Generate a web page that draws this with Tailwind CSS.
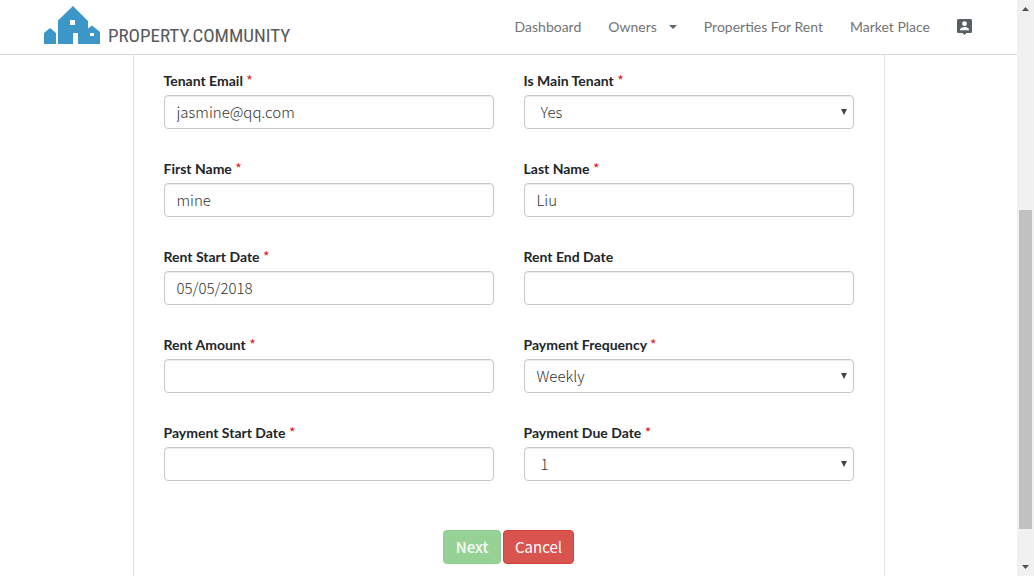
<!DOCTYPE html>
<html lang="en">
<head>
<meta charset="utf-8">
<meta name="viewport" content="width=device-width, initial-scale=1">
<title>Property.Community</title>
<script src="https://cdn.jsdelivr.net/npm/@tailwindcss/browser@4"></script>
</head>
<body class="flex h-screen overflow-hidden bg-white font-['Lato',sans-serif] text-[#212529]">
<div class="flex min-w-0 flex-1 flex-col">
  <header class="flex h-[55px] shrink-0 items-center justify-between border-b border-[#d8d8d8] pr-[45px] pl-[43px]">
    <a href="#" class="flex h-full items-start gap-2 pt-[5px] text-[#58595b]">
      <svg class="h-[39px] w-[57px]" viewBox="0 0 57 39" aria-hidden="true">
        <path fill="#3d96c8" fill-rule="evenodd" d="M1 39V28l6-5 6 5v11zM15 39V15.500L30 1l15 15v7.500l4-3 8 6.500v12H35V28h-5v11zM27 15v5h5v-5zM47 28v3h4v-3z"/>
      </svg>
      <span class="pt-[17px] text-[19px] leading-[28px] font-['Roboto_Condensed','Liberation_Sans_Narrow',sans-serif]">PROPERTY.COMMUNITY</span>
    </a>
    <nav class="flex items-center gap-[27px] text-[14px] leading-5 text-[#737373]">
      <a href="#">Dashboard</a>
      <a href="#" class="flex items-center gap-3">Owners
        <svg class="h-1 w-2" viewBox="0 0 8 4" aria-hidden="true"><path fill="#666" d="M0 0h8L4 4z"/></svg>
      </a>
      <a href="#">Properties For Rent</a>
      <a href="#">Market Place</a>
      <a href="#" aria-label="Account">
        <svg class="h-4 w-[15px]" viewBox="0 0 15 16" aria-hidden="true">
          <path fill="#566060" fill-rule="evenodd" d="M1.500 0h12Q15 0 15 1.500v11Q15 14 13.500 14H9.500l-2 2-2-2h-4Q0 14 0 12.500v-11Q0 0 1.500 0zM7.500 2.300a2.400 2.400 0 1 0 0 4.800a2.400 2.400 0 1 0 0-4.800zM3 11.200h9v-.7C12 8.900 9.200 8 7.500 8S3 8.900 3 10.500z"/>
        </svg>
      </a>
    </nav>
  </header>
  <main class="flex min-h-0 flex-1 px-8">
    <form class="mx-auto w-full max-w-[752px] border-x border-[#e3e3e3] px-[30px] pt-4">
      <div class="grid grid-cols-2 gap-[30px]">
        <div class="flex flex-col gap-1">
          <label for="email" class="h-5 text-[14px] leading-5 font-bold">Tenant Email <span class="font-['Noto_Sans_CJK_SC',sans-serif] leading-none font-normal text-[#e01b24]">*</span></label>
          <input id="email" type="text" value="jasmine@qq.com" class="h-[34px] w-full rounded border border-[#c8c8c8] px-3 pb-[2px] font-['Noto_Sans_CJK_SC',sans-serif] text-[15px] font-light text-[#333] shadow-[inset_0_1px_1px_rgba(0,0,0,0.08)]">
        </div>
        <div class="flex flex-col gap-1">
          <label for="main" class="h-5 text-[14px] leading-5 font-bold">Is Main Tenant <span class="font-['Noto_Sans_CJK_SC',sans-serif] leading-none font-normal text-[#e01b24]">*</span></label>
          <div class="relative">
            <select id="main" class="block h-[34px] w-full appearance-none rounded border border-[#c8c8c8] px-4 font-['Noto_Sans_CJK_SC',sans-serif] text-[15px] font-light text-[#333] shadow-[inset_0_1px_1px_rgba(0,0,0,0.08)]"><option>Yes</option><option>No</option></select>
            <svg class="pointer-events-none absolute top-[14px] right-[7px] h-[6px] w-[6px]" viewBox="0 0 6 6" aria-hidden="true"><path fill="#444" d="M0 0h6L3 6z"/></svg>
          </div>
        </div>
        <div class="flex flex-col gap-1">
          <label for="first" class="h-5 text-[14px] leading-5 font-bold">First Name <span class="font-['Noto_Sans_CJK_SC',sans-serif] leading-none font-normal text-[#e01b24]">*</span></label>
          <input id="first" type="text" value="mine" class="h-[34px] w-full rounded border border-[#c8c8c8] px-3 pb-[2px] font-['Noto_Sans_CJK_SC',sans-serif] text-[15px] font-light text-[#333] shadow-[inset_0_1px_1px_rgba(0,0,0,0.08)]">
        </div>
        <div class="flex flex-col gap-1">
          <label for="last" class="h-5 text-[14px] leading-5 font-bold">Last Name <span class="font-['Noto_Sans_CJK_SC',sans-serif] leading-none font-normal text-[#e01b24]">*</span></label>
          <input id="last" type="text" value="Liu" class="h-[34px] w-full rounded border border-[#c8c8c8] px-3 pb-[2px] font-['Noto_Sans_CJK_SC',sans-serif] text-[15px] font-light text-[#333] shadow-[inset_0_1px_1px_rgba(0,0,0,0.08)]">
        </div>
        <div class="flex flex-col gap-1">
          <label for="start" class="h-5 text-[14px] leading-5 font-bold">Rent Start Date <span class="font-['Noto_Sans_CJK_SC',sans-serif] leading-none font-normal text-[#e01b24]">*</span></label>
          <input id="start" type="text" value="05/05/2018" class="h-[34px] w-full rounded border border-[#c8c8c8] px-3 pb-[2px] font-['Noto_Sans_CJK_SC',sans-serif] text-[15px] font-light text-[#333] shadow-[inset_0_1px_1px_rgba(0,0,0,0.08)]">
        </div>
        <div class="flex flex-col gap-1">
          <label for="end" class="h-5 text-[14px] leading-5 font-bold">Rent End Date</label>
          <input id="end" type="text" class="h-[34px] w-full rounded border border-[#c8c8c8] px-3 pb-[2px] font-['Noto_Sans_CJK_SC',sans-serif] text-[15px] font-light text-[#333] shadow-[inset_0_1px_1px_rgba(0,0,0,0.08)]">
        </div>
        <div class="flex flex-col gap-1">
          <label for="amount" class="h-5 text-[14px] leading-5 font-bold">Rent Amount <span class="font-['Noto_Sans_CJK_SC',sans-serif] leading-none font-normal text-[#e01b24]">*</span></label>
          <input id="amount" type="text" class="h-[34px] w-full rounded border border-[#c8c8c8] px-3 pb-[2px] font-['Noto_Sans_CJK_SC',sans-serif] text-[15px] font-light text-[#333] shadow-[inset_0_1px_1px_rgba(0,0,0,0.08)]">
        </div>
        <div class="flex flex-col gap-1">
          <label for="freq" class="h-5 text-[14px] leading-5 font-bold">Payment Frequency <span class="font-['Noto_Sans_CJK_SC',sans-serif] leading-none font-normal text-[#e01b24]">*</span></label>
          <div class="relative">
            <select id="freq" class="block h-[34px] w-full appearance-none rounded border border-[#c8c8c8] px-3 font-['Noto_Sans_CJK_SC',sans-serif] text-[15px] font-light text-[#333] shadow-[inset_0_1px_1px_rgba(0,0,0,0.08)]"><option>Weekly</option><option>Fortnightly</option><option>Monthly</option></select>
            <svg class="pointer-events-none absolute top-[14px] right-[7px] h-[6px] w-[6px]" viewBox="0 0 6 6" aria-hidden="true"><path fill="#444" d="M0 0h6L3 6z"/></svg>
          </div>
        </div>
        <div class="flex flex-col gap-1">
          <label for="paystart" class="h-5 text-[14px] leading-5 font-bold">Payment Start Date <span class="font-['Noto_Sans_CJK_SC',sans-serif] leading-none font-normal text-[#e01b24]">*</span></label>
          <input id="paystart" type="text" class="h-[34px] w-full rounded border border-[#c8c8c8] px-3 pb-[2px] font-['Noto_Sans_CJK_SC',sans-serif] text-[15px] font-light text-[#333] shadow-[inset_0_1px_1px_rgba(0,0,0,0.08)]">
        </div>
        <div class="flex flex-col gap-1">
          <label for="due" class="h-5 text-[14px] leading-5 font-bold">Payment Due Date <span class="font-['Noto_Sans_CJK_SC',sans-serif] leading-none font-normal text-[#e01b24]">*</span></label>
          <div class="relative">
            <select id="due" class="block h-[34px] w-full appearance-none rounded border border-[#c8c8c8] px-4 font-['Noto_Sans_CJK_SC',sans-serif] text-[15px] font-light text-[#333] shadow-[inset_0_1px_1px_rgba(0,0,0,0.08)]"><option>1</option><option>2</option><option>3</option></select>
            <svg class="pointer-events-none absolute top-[14px] right-[7px] h-[6px] w-[6px]" viewBox="0 0 6 6" aria-hidden="true"><path fill="#444" d="M0 0h6L3 6z"/></svg>
          </div>
        </div>
      </div>
      <div class="mt-[49px] flex justify-center gap-[2px] font-['Noto_Sans_CJK_SC',sans-serif] text-[15px] leading-5 text-white">
        <button type="button" disabled class="h-[34px] w-[58px] rounded border border-[#8ccc8c] bg-[#96d296] font-medium text-white/90">Next</button>
        <button type="button" class="h-[34px] w-[71px] rounded border border-[#d43f3a] bg-[#d9534f]">Cancel</button>
      </div>
    </form>
  </main>
</div>
<div class="flex w-[17px] shrink-0 flex-col items-center justify-between bg-[#f1f1f1] py-[7px]" aria-hidden="true">
  <svg class="h-1 w-[7px]" viewBox="0 0 7 4"><path fill="#505050" d="M0 4h7L3.500 0z"/></svg>
  <div class="mt-[162px] h-[319px] w-[13px] bg-[#c1c1c1]"></div>
  <svg class="h-1 w-[7px]" viewBox="0 0 7 4"><path fill="#505050" d="M0 0h7L3.500 4z"/></svg>
</div>
</body>
</html>
